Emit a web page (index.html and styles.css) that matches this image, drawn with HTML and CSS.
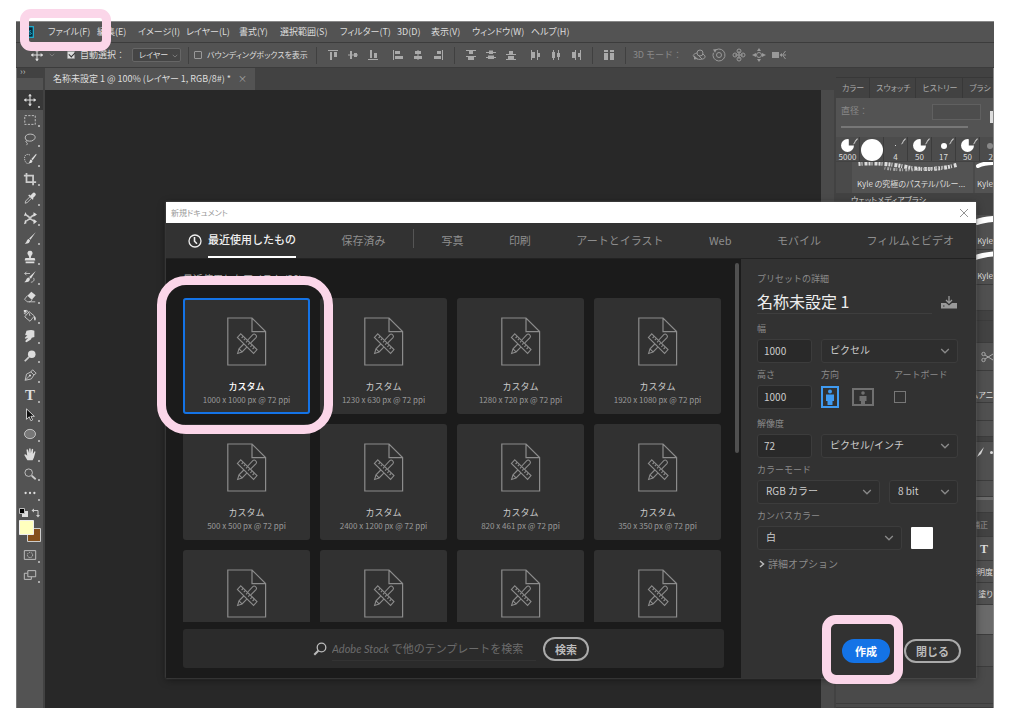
FILE: index.html
```html
<!DOCTYPE html>
<html lang="ja">
<head>
<meta charset="utf-8">
<title>新規ドキュメント</title>
<link rel="stylesheet" href="styles.css">
</head>
<body>
<svg class="defs" aria-hidden="true">
  <symbol id="doc" viewBox="0 0 40 49"><g fill="none" stroke="#8c8c8c" stroke-width="1.2"><path d="M.8 1H25l13.6 13.6V48H.8ZM25 1v13.6h13.6"/><g stroke-width="1.100"><path d="M13.800 16.800 30 32.600 26.600 36.400 10.400 20.400Z"/><path d="m16 19.500-1.400 1.500m3.600.7-1.400 1.500m3.600.7-1.400 1.500m3.600.7-1.400 1.500m3.600.7-1.400 1.500m3.600.7-1.400 1.500"/><path d="m16.800 27-4.800 4.800-1.400 4.600 4.500-1.500 4.700-4.700M20.800 23l5-5.400q1.400-1.200 2.900.2t.3 2.900l-5.200 5.200M12 31.800l3.100 3.100"/></g></g></symbol>
  <symbol id="chev" viewBox="0 0 10 6"><path d="m1.200 1 3.800 3.800L8.800 1" fill="none" stroke="#8a8a8a" stroke-width="1.300"/></symbol>
  <symbol id="move" viewBox="0 0 16 16"><path d="M8 1.500v13M1.500 8h13" stroke="#ddd" stroke-width="1.200"/><path d="M8 1 5.800 3.800h4.400zM8 15l2.200-2.800H5.800zM1 8l2.800-2.200v4.400zM15 8l-2.800 2.200V5.800z" fill="#ddd"/></symbol>
  <symbol id="tip" viewBox="0 0 8 10"><path d="M7.500.5 4.500 4" stroke="#ccc" stroke-width="1.200"/><path d="M4.500 3.500 2 7.500l3-2z" fill="#ccc"/></symbol>
</svg>

<div class="app">
  <nav class="menubar">
    <svg class="logo" viewBox="0 0 12 12"><rect x=".7" y=".7" width="10.600" height="10.600" fill="#06283a" stroke="#20b4d8" stroke-width="1.200"/><path d="M7 7.800c1 .8 2.400.6 2.400-.3 0-1-2.200-.8-2.200-2 0-.9 1.300-1 2-.5" fill="none" stroke="#20b4d8"/></svg>
    <ul class="menus">
      <li>ファイル(F)</li><li>編集(E)</li><li>イメージ(I)</li><li>レイヤー(L)</li><li>書式(Y)</li><li>選択範囲(S)</li><li>フィルター(T)</li><li>3D(D)</li><li>表示(V)</li><li>ウィンドウ(W)</li><li>ヘルプ(H)</li>
    </ul>
    <span class="mark mark-menu"></span>
  </nav>

  <div class="options">
    <svg class="i14"><use href="#move"/></svg>
    <svg class="i6"><use href="#chev"/></svg>
    <label class="check check-on"><input type="checkbox" checked>自動選択：</label>
    <span class="pick"><select class="layer" aria-label="選択対象"><option>レイヤー</option></select><svg class="pick-arrow small"><use href="#chev"/></svg></span>
    <i class="sep sep-a"></i>
    <label class="check check-box"><input type="checkbox">バウンディングボックスを表示</label>
    <i class="sep sep-b"></i>
    <div class="icons">
      <svg viewBox="0 0 12 12"><path d="M1 1h10v1H1zM3 3h2v8H3zM7 3h3v5H7z"/></svg>
      <svg viewBox="0 0 12 12"><path d="M1 5.500h10v1H1zM3 2h2v8H3zM7 4h3v4H7z"/></svg>
      <svg viewBox="0 0 12 12"><path d="M1 10h10v1H1zM3 1h2v8H3zM7 4h3v5H7z"/></svg>
    </div>
    <div class="icons">
      <svg viewBox="0 0 12 12"><path d="M1 1h1v10H1zM3 2h5v3H3zM3 7h8v3H3z"/></svg>
      <svg viewBox="0 0 12 12"><path d="M5.500 1h1v10h-1zM3 2h6v3H3zM2 7h8v3H2z"/></svg>
      <svg viewBox="0 0 12 12"><path d="M10 1h1v10h-1zM5 2h4v3H5zM2 7h7v3H2z"/></svg>
    </div>
    <i class="sep"></i>
    <div class="icons">
      <svg viewBox="0 0 12 12"><path d="M1 1h10v1H1zM4 2h4v3H4zM1 7h10v1H1zM3 8h6v3H3z"/></svg>
      <svg viewBox="0 0 12 12"><path d="M1 3h10v1H1zM4 1.500h4V5H4zM1 8h10v1H1zM3 6.500h6V10H3z"/></svg>
      <svg viewBox="0 0 12 12"><path d="M1 5h10v1H1zM4 2h4v3H4zM1 10h10v1H1zM3 7h6v3H3z"/></svg>
    </div>
    <div class="icons">
      <svg viewBox="0 0 12 12"><path d="M1 1h1v10H1zM2 3h3v6H2zM7 1h1v10H7zM8 4h2v4H8z"/></svg>
      <svg viewBox="0 0 12 12"><path d="M3 1h1v10H3zM2 3h3v6H2zM8 1h1v10H8zM7 4h3v4H7z"/></svg>
      <svg viewBox="0 0 12 12"><path d="M5 1h1v10H5zM2 3h3v6H2zM10 1h1v10h-1zM8 4h2v4H8z"/></svg>
    </div>
    <i class="sep"></i>
    <div class="icons"><svg viewBox="0 0 12 12"><path d="M1 1h4v2H1zM7 1h4v2H7zM1 4h4v7H1zM7 4h4v7H7z"/></svg></div>
    <i class="sep"></i>
    <span class="mode">3D モード：</span>
    <div class="icons icons-3d">
      <svg viewBox="0 0 14 14"><g class="ln"><circle cx="8" cy="5" r="3"/><path d="M5 5C1 6 0 8 3 9.500M5 11c4 1 9 0 8-3-.4-1-1.400-1.600-2.500-2M7 8l3 3"/></g><path d="M2 7.500 6 11l-4 .5z"/></svg>
      <svg viewBox="0 0 14 14"><g class="ln"><circle cx="7" cy="7" r="2.500"/><path d="M4 1.800a6 6 0 1 1-2.600 3"/></g><path d="M1 1.500 5 1 3 4.800z"/></svg>
      <svg viewBox="0 0 14 14"><g class="ln"><circle cx="7" cy="3" r="2"/><circle cx="7" cy="11" r="2"/><circle cx="3" cy="7" r="2"/><circle cx="11" cy="7" r="2"/><path d="M7 3v8M3 7h8"/></g></svg>
      <svg viewBox="0 0 14 14"><circle class="ln" cx="7" cy="7" r="2.500"/><path d="M7 0 5 3h4zM7 14l2-3H5zM0 7l4-2v4zM14 7l-4 2V5z"/></svg>
      <svg viewBox="0 0 14 14"><path d="M0 4h7v6H0zM7.500 7 10 5v4z"/><path class="ln" d="m13.500 3-3 4 3 4M11 7h3"/></svg>
    </div>
  </div>

  <div class="work">
    <aside class="tools">
      <div class="tools-head">››</div>
      <div class="grip"></div>
      <div class="toollist">
        <button class="tool on" aria-label="移動"><svg viewBox="0 0 16 16"><use href="#move"/></svg></button>
        <button class="tool" aria-label="長方形選択"><svg viewBox="0 0 16 16"><rect class="s" x="2" y="3" width="12" height="10" stroke-dasharray="2.500 1.500"/></svg></button>
        <button class="tool" aria-label="なげなわ"><svg viewBox="0 0 16 16"><path class="s" d="M5 10C1 8 2 3 7 2.500s8 2 6.500 5S8 11 5 10c-1.500-.5-2.500 1-1 2s1 1.500 0 3"/></svg></button>
        <button class="tool" aria-label="クイック選択"><svg viewBox="0 0 16 16"><path class="s" d="M8 3.500C3 1 1 5 2 9s3 5 6 3.500" stroke-dasharray="1.500 1"/><path class="f" d="M15 2 9.500 8l1.500 1.500L15.500 3zM9 8.500C7.500 9 8 11 6.500 12.500 9 13 11 12 10.800 10z"/></svg></button>
        <button class="tool" aria-label="切り抜き"><svg viewBox="0 0 16 16"><path class="s w" d="M4 1v10.500h11M1 4h10.500v11"/></svg></button>
        <button class="tool" aria-label="スポイト"><svg viewBox="0 0 16 16"><path class="f" d="M8.500 5 11 2.500q1.500-1.500 3 0t0 3L11.500 8l.5 1-1 1-5-5 1-1z"/><path class="s" d="m8 6.500-5 5L2.500 14l2.300-.8L10 8"/></svg></button>
        <button class="tool" aria-label="コンテンツに応じた移動"><svg viewBox="0 0 16 16"><path class="s w" d="M2 4c4 0 8 8 12 8M2 12c4 0 8-8 12-8"/><path class="f" d="m12 1.500 4 2.500-4 2.500zM3 1l1 3-3 2zM3 10l1 4-3 1zM12 9l4 3-4 3z"/></svg></button>
        <button class="tool" aria-label="ブラシ"><svg viewBox="0 0 16 16"><path class="f" d="M14.500 1.500 7 8.500 8.500 10zM6.500 9C4 9.500 5 12 2 14.500c3 .5 6-1 6-4z"/></svg></button>
        <button class="tool" aria-label="スタンプ"><svg viewBox="0 0 16 16"><path class="f" d="M8 1a2.700 2.700 0 0 1 2 4.700L9 8v1h4q1 0 1 3H2q0-3 1-3h4V8L6 5.700A2.700 2.700 0 0 1 8 1zM3 13h10v2H3z"/></svg></button>
        <button class="tool" aria-label="ヒストリーブラシ"><svg viewBox="0 0 16 16"><path class="f" d="M14.500 1 7 8l2 2zM6.500 8.500c-3 .5-2.500 3.500-5 5.500 3.500.5 6.500-1 6.500-4z"/><path class="s" d="M2 4h6M2 4l2-2M2 4l2 2M12 9c2 3-1 5-3 5" /></svg></button>
        <button class="tool" aria-label="消しゴム"><svg viewBox="0 0 16 16"><path class="f" d="m9.500 2 5 4-4.500 5-5-4.500z"/><path class="s" d="M5 6.500 1.800 10.500l3 3H8l2.500-2.500M7 13.500h7"/></svg></button>
        <button class="tool" aria-label="塗りつぶし"><svg viewBox="0 0 16 16"><path class="s" d="m7 3 6 5-5 6-6-5zM1 2l3 2M1 5l3 1M4 1l3 4 1 3"/><path class="f" d="M13 8c2 1 2 4 1 5s-2-2-1-5zM1 1h3v3H1z"/></svg></button>
        <button class="tool" aria-label="指先"><svg viewBox="0 0 16 16"><path class="f" d="M4 2q6-2 9 0v7l-3 1-1 2-5 3q-2 0-1-2l3-3-3 1q-2-1 0-2l2-2-2 0q-1-1 0-2z"/></svg></button>
        <button class="tool" aria-label="覆い焼き"><svg viewBox="0 0 16 16"><circle class="f" cx="10" cy="6" r="4.300"/><path class="s w" d="m7 9-5 5"/></svg></button>
        <button class="tool" aria-label="ペン"><svg viewBox="0 0 16 16"><path class="s" d="M2.500 14 4 7l5-2.500L12.500 8l-3 4.500zM2.500 14l5-5M9 4.500 11 2l4 4-2.500 2"/><circle class="f" cx="8" cy="8.500" r="1.200"/></svg></button>
        <button class="tool letter" aria-label="文字">T</button>
        <button class="tool" aria-label="パス選択"><svg viewBox="0 0 16 16"><path d="M4 1v12l3-3 2 4.500 2-1L9 9.500h4z" fill="#111" stroke="#ddd"/></svg></button>
        <button class="tool" aria-label="楕円形"><svg viewBox="0 0 16 16"><ellipse cx="8" cy="8" rx="6.300" ry="5.300" fill="#777" stroke="#ccc"/></svg></button>
        <button class="tool" aria-label="手のひら"><svg viewBox="0 0 16 16"><path class="f" d="M5 15 1.500 9Q2 7.500 4 9l.8 1L4 3q1-1 1.700 0L7 7V2q1-1.200 1.700 0L9 7l1-4.500q1-1 1.600 0L11.300 8 13 5q1-.5 1.300.5L12.500 12 11 15z"/></svg></button>
        <button class="tool" aria-label="ズーム"><svg viewBox="0 0 16 16"><circle class="s" cx="6.500" cy="6.500" r="4.300"/><path class="s w" d="m10 10 4.500 4"/></svg></button>
        <button class="tool" aria-label="その他"><svg viewBox="0 0 16 16"><circle class="f" cx="3" cy="8" r="1.300"/><circle class="f" cx="8" cy="8" r="1.300"/><circle class="f" cx="13" cy="8" r="1.300"/></svg></button>
      </div>
      <svg class="swatches" viewBox="0 0 24 38"><path d="M4 4h6v6H4z" fill="#ddd"/><path d="M1.500 1.500h5v5h-5z" fill="#000" stroke="#bbb"/><path d="M15 3.500h5v5" fill="none" stroke="#ccc"/><path d="M13.500 3.500 16 1.500v4zM20 10.500 18 8h4z" fill="#ccc"/><path d="M9.500 21.500h13v13h-13z" fill="#84501c" stroke="#ccc"/><path d="M1.500 13.500h14v14h-14z" fill="#ffffbe" stroke="#eee"/></svg>
      <button class="tool extra" aria-label="クイックマスク"><svg viewBox="0 0 16 16"><path class="s" d="M1.500 3h13v10h-13z"/><circle class="s" cx="8" cy="8" r="3" stroke-dasharray="1.500 1"/></svg></button>
      <button class="tool extra" aria-label="スクリーンモード"><svg viewBox="0 0 16 16"><path class="s" d="M5.500 3h9v7h-9zM5 6H1.500v7h8v-3"/></svg></button>
    </aside>

    <main class="docs">
      <div class="doctabs"><div class="doctab">名称未設定 1 @ 100% (レイヤー 1, RGB/8#) *<span>×</span></div></div>
      <div class="canvas"></div>
    </main>

    <aside class="dock">
      <div class="dock-head"></div>
      <div class="dock-tabs"><span>カラー</span><span>スウォッチ</span><span>ヒストリー</span><span>ブラシ</span></div>
      <div class="dock-size"><div class="size-row"><span>直径：</span><i class="box"></i><i class="new"></i></div><i class="track"></i></div>
      <div class="dots">
        <div><i class="d d14 cut"></i><svg><use href="#tip"/></svg><b>5000</b></div>
        <div><i class="d d22"></i></div>
        <div><i class="d d1"></i><svg><use href="#tip"/></svg><b>4</b></div>
        <div><i class="d d14 cut"></i><svg><use href="#tip"/></svg><b>50</b></div>
        <div><i class="d d6"></i><svg><use href="#tip"/></svg><b>17</b></div>
        <div><i class="d d14 cut"></i><svg><use href="#tip"/></svg><b>50</b></div>
        <div class="last"><i class="d d6 dim"></i><b>2</b></div>
      </div>
      <div class="brushes">
        <div class="brush wide"><svg viewBox="0 0 116 12"><path d="M4 2q24-2 48 3t50-2" fill="none" stroke="#ddd" stroke-width="4" stroke-dasharray="2 1 1 2 3 1"/><path d="M30 6q20 4 60-1" fill="none" stroke="#aaa" stroke-width="3" stroke-dasharray="1 2 2 1"/></svg><span>Kyle の究極のパステルパルー...</span></div>
        <div class="brush"><svg viewBox="0 0 18 12"><path d="M3 4q6-3 15-3" stroke="#fff" stroke-width="4" fill="none" stroke-linecap="round"/></svg><span>Kyle</span></div>
      </div>
      <div class="folder">ウェットメディアブラシ</div>
      <div class="strip kyle"><svg viewBox="0 0 20 12"><path d="M4 7q5-2 16-3" stroke="#fff" stroke-width="6" fill="none" stroke-linecap="round"/></svg><span>Kyle</span></div>
      <div class="strip kyle"><svg viewBox="0 0 20 12"><path d="M1 8q8-3 19-4" stroke="#fff" stroke-width="5" fill="none" stroke-linecap="round"/></svg><span>Kyle</span></div>
      <div class="strip h26"></div>
      <div class="strip dark h10"></div>
      <div class="strip dark h22"></div>
      <div class="strip h28"><svg class="i12" viewBox="0 0 12 12"><g fill="none" stroke="#aaa"><circle cx="2.500" cy="3" r="1.700"/><circle cx="2.500" cy="9" r="1.700"/><path d="m4 4 8 5M4 8l8-5"/></g></svg></div>
      <div class="strip h32 low"><span>ムアニ</span></div>
      <div class="strip h18"></div>
      <div class="strip h16"></div>
      <div class="strip dark h5"></div>
      <div class="strip h39 top"><svg class="i12" viewBox="0 0 12 12"><path d="M8 1 3 7l-2 4 4-3z" fill="#ddd"/></svg><i class="dot"></i></div>
      <div class="strip h16"></div>
      <div class="strip h16 bar"></div>
      <div class="strip dark h24 dimtext"><span>補正</span></div>
      <div class="strip h24 serif"><span>T</span></div>
      <div class="strip h22"><span>透明度</span></div>
      <div class="strip h22"><span>塗り</span></div>
      <div class="strip lit h30"></div>
      <div class="strip h32"></div>
      <div class="strip mid h37"></div>
      <div class="strip mid rest"></div>
    </aside>
  </div>

  <section class="dialog" role="dialog" aria-label="新規ドキュメント">
    <header class="titlebar"><span>新規ドキュメント</span><button class="close" aria-label="閉じる"><svg viewBox="0 0 10 10"><path d="m1 1 8 8M9 1 1 9" stroke="#888" stroke-width=".9"/></svg></button></header>
    <nav class="tabs">
      <button class="tab active"><svg viewBox="0 0 14 14"><g fill="none" stroke="#eee" stroke-width="1.300"><circle cx="7" cy="7" r="6"/><path d="M6.500 3v4.200l2.500 2.500" stroke-width="1.600"/></g></svg><span>最近使用したもの</span></button>
      <button class="tab">保存済み</button><i class="tabsep"></i>
      <button class="tab">写真</button><button class="tab">印刷</button><button class="tab">アートとイラスト</button><button class="tab">Web</button><button class="tab">モバイル</button><button class="tab">フィルムとビデオ</button>
    </nav>
    <div class="content">
      <div class="left">
        <h2>最近使用したアイテム (20)</h2>
        <div class="presets">
          <button class="card selected"><svg><use href="#doc"/></svg><b>カスタム</b><small>1000 x 1000 px @ 72 ppi</small></button>
          <button class="card"><svg><use href="#doc"/></svg><b>カスタム</b><small>1230 x 630 px @ 72 ppi</small></button>
          <button class="card"><svg><use href="#doc"/></svg><b>カスタム</b><small>1280 x 720 px @ 72 ppi</small></button>
          <button class="card"><svg><use href="#doc"/></svg><b>カスタム</b><small>1920 x 1080 px @ 72 ppi</small></button>
          <button class="card"><svg><use href="#doc"/></svg><b>カスタム</b><small>500 x 500 px @ 72 ppi</small></button>
          <button class="card"><svg><use href="#doc"/></svg><b>カスタム</b><small>2400 x 1200 px @ 72 ppi</small></button>
          <button class="card"><svg><use href="#doc"/></svg><b>カスタム</b><small>820 x 461 px @ 72 ppi</small></button>
          <button class="card"><svg><use href="#doc"/></svg><b>カスタム</b><small>350 x 350 px @ 72 ppi</small></button>
          <button class="card" aria-label="カスタム"><svg><use href="#doc"/></svg></button>
          <button class="card" aria-label="カスタム"><svg><use href="#doc"/></svg></button>
          <button class="card" aria-label="カスタム"><svg><use href="#doc"/></svg></button>
          <button class="card" aria-label="カスタム"><svg><use href="#doc"/></svg></button>
        </div>
        <form class="search">
          <svg viewBox="0 0 14 14"><g fill="none" stroke="#bbb"><circle cx="8.500" cy="5.500" r="4.300" stroke-width="1.300"/><path d="m5.300 8.700-4 4" stroke-width="2"/></g></svg>
          <input type="text" aria-label="テンプレートを検索" placeholder="Adobe Stock で他のテンプレートを検索">
          <button type="button" class="pill">検索</button>
        </form>
        <i class="thumb"></i>
      </div>
      <form class="details">
        <h3>プリセットの詳細</h3>
        <div class="name"><input type="text" aria-label="名前" value="名称未設定 1"><button type="button" class="save" aria-label="プリセットを保存"><svg viewBox="0 0 18 13"><path d="M1 7h5l3 2.500L12 7h5v5.500H1z" fill="#999"/><path d="M9 0v6M6 4l3 3 3-3" fill="none" stroke="#999" stroke-width="1.300"/><path d="M3 10h1.500" stroke="#333"/></svg></button></div>
        <div class="row">
          <div class="field num"><label for="w">幅</label><input id="w" type="text" value="1000"></div>
          <div class="field grow"><span class="pick"><select aria-label="単位"><option>ピクセル</option></select><svg class="pick-arrow"><use href="#chev"/></svg></span></div>
        </div>
        <div class="row after">
          <div class="field num"><label for="h">高さ</label><input id="h" type="text" value="1000"></div>
          <div class="field grow"><span class="lbl">方向</span>
            <div class="orient">
              <button type="button" aria-label="縦"><svg width="18" height="22" viewBox="0 0 18 22"><path d="M1 1h16v20H1z" fill="none" stroke="#3f9bf2" stroke-width="2"/><g fill="#3f9bf2"><circle cx="9" cy="5.500" r="2"/><path d="M5 8.500h8V15h-1.500v4h-5v-4H5z"/></g></svg></button>
              <button type="button" aria-label="横"><svg width="22" height="18" viewBox="0 0 22 18"><path d="M1 1h20v16H1z" fill="none" stroke="#707070" stroke-width="2"/><g fill="#707070"><circle cx="11" cy="5" r="1.800"/><path d="M7.500 8h7v5H13v3H9v-3H7.500z"/></g></svg></button>
            </div></div>
          <div class="field art"><label for="art">アートボード</label><div class="artbox"><input id="art" type="checkbox"></div></div>
        </div>
        <div class="row">
          <div class="field num"><label for="r">解像度</label><input id="r" type="text" value="72"></div>
          <div class="field grow"><span class="pick"><select aria-label="解像度の単位"><option>ピクセル/インチ</option></select><svg class="pick-arrow"><use href="#chev"/></svg></span></div>
        </div>
        <div class="row">
          <div class="field grow"><label for="cm">カラーモード</label><span class="pick"><select id="cm"><option>RGB カラー</option></select><svg class="pick-arrow"><use href="#chev"/></svg></span></div>
          <div class="field bits"><span class="pick"><select aria-label="ビット数"><option>8 bit</option></select><svg class="pick-arrow"><use href="#chev"/></svg></span></div>
        </div>
        <div class="row">
          <div class="field grow"><label for="cc">カンバスカラー</label><span class="pick"><select id="cc"><option>白</option></select><svg class="pick-arrow"><use href="#chev"/></svg></span></div>
          <div class="field colour"><button type="button" aria-label="カンバスの色"></button></div>
        </div>
        <button type="button" class="more"><svg viewBox="0 0 6 8"><path d="m1 1 3.500 3L1 7" fill="none" stroke="#bbb" stroke-width="1.500"/></svg>詳細オプション</button>
        <div class="actions"><button type="button" class="pill primary">作成</button><button type="button" class="pill">閉じる</button></div>
      </form>
    </div>
    <span class="mark mark-card"></span>
    <span class="mark mark-create"></span>
  </section>
</div>
</body>
</html>
```
FILE: styles.css
```css
* { box-sizing: border-box; }
body {
  margin: 0; min-height: 100vh; padding: 21px 30px 18px 16px; display: flex;
  background: #fff; color: #ddd;
  font: 9px/14px "Noto Sans CJK JP", "Noto Sans", sans-serif;
}
button, input, select { font: inherit; color: inherit; margin: 0; padding: 0; border: 0; background: none; }
button { display: block; }
svg { display: block; flex: none; }
.defs { position: absolute; width: 0; height: 0; }
.app { position: relative; flex: 1; min-width: 0; display: flex; flex-direction: column; background: #535353; }

.menubar { position: relative; height: 22px; display: flex; align-items: center; border-top: 1px solid #888; border-bottom: 1px solid #3c3c3c; }
.logo { width: 12px; height: 12px; margin-left: 6px; }
.menus {
  margin: 0 0 0 14px; padding: 0; list-style: none; display: grid; white-space: nowrap;
  grid-template-columns: 49px 41px 48px 53px 41px 60px 57px 34px 41px 59px 50px;
  font-feature-settings: "palt";
}

.options { height: 25px; display: flex; align-items: center; padding-left: 14px; white-space: nowrap; border-bottom: 1px solid #3c3c3c; }
.i14 { width: 14px; height: 14px; }
.i12 { width: 12px; height: 12px; }
.i6 { width: 6px; height: 4px; margin: 0 12px 0 5px; }
.check { display: flex; align-items: center; gap: 5px; }
.check input { appearance: none; width: 8px; height: 8px; border: 1px solid #999; border-radius: 1px; }
.check-on { width: 65px; }
.check-on input { background: #ddd; position: relative; }
.check-on input::after { content: ""; position: absolute; left: 1px; top: 0; width: 5px; height: 3px; border: solid #333; border-width: 0 0 1px 1px; transform: rotate(-45deg); }
.check-box { font-size: 8px; font-feature-settings: "palt"; }
.pick { position: relative; display: block; }
.pick select { appearance: none; display: block; width: 100%; }
.pick-arrow { position: absolute; right: 8px; top: 9px; width: 10px; height: 6px; pointer-events: none; }
.pick-arrow.small { right: 3px; top: 6px; width: 6px; height: 4px; }
.pick .layer { width: 49px; height: 14px; padding-left: 6px; background: #454545; border: 1px solid #666; border-radius: 2px; font-size: 8px; line-height: 12px; font-feature-settings: "palt"; }
.sep { width: 1px; height: 17px; background: #404040; }
.sep-a { margin: 0 5px 0 7px; }
.sep-b { margin-left: 8px; }
.icons { display: flex; gap: 8px; padding: 0 10px; }
.icons + .icons { padding-left: 3px; }
.icons svg { width: 12px; height: 12px; fill: #aaa; }
.icons-3d { gap: 6px; }
.icons-3d svg { width: 14px; height: 14px; fill: #999; }
.icons-3d .ln { fill: none; stroke: #999; }
.mode { padding-left: 7px; color: #8a8a8a; }

.work { flex: 1; min-height: 0; display: flex; background: #424242; }
.tools { width: 27px; background: #535353; border-left: 1px solid #777; }
.tools-head { height: 10px; padding-left: 3px; background: #424242; color: #bbb; line-height: 7px; }
.grip { height: 12px; }
.toollist { height: 413px; display: flex; flex-direction: column; }
.tool { position: relative; flex: 1; width: 100%; display: flex; align-items: center; justify-content: center; padding: 0; }
.tool svg { width: 14px; height: 14px; }
.tool::after { content: ""; position: absolute; right: 3px; bottom: 2px; width: 2px; height: 2px; background: #aaa; }
.tool.on { background: #383838; }
.letter { font: bold 15px/18px "Liberation Serif", serif; }
.tool .s { fill: none; stroke: #ccc; stroke-width: 1; }
.tool .w { stroke-width: 2; }
.tool .f { fill: #ddd; }
.swatches { width: 24px; height: 38px; margin: 4px 0 0 1px; }
.extra { height: 20px; }
.docs { flex: 1; min-width: 0; display: flex; flex-direction: column; padding-left: 2px; }
.doctabs { height: 22px; display: flex; }
.doctab { padding: 4px 8px; background: #535353; white-space: nowrap; font-feature-settings: "palt"; }
.doctab span { margin-left: 7px; color: #aaa; }
.canvas { flex: 1; background: #282828; border-right: 13px solid #4a4a4a; }

.dock { width: 160px; display: flex; flex-direction: column; overflow: hidden; padding-left: 2px; white-space: nowrap; font-size: 8px; font-feature-settings: "palt"; border-right: 1px solid #888; background: #424242; }
.dock > * { flex: none; }
.dock-head { height: 10px; border-bottom: 1px solid #383838; }
.dock-tabs { height: 20px; display: flex; align-items: center; color: #aaa; }
.dock-tabs span { padding: 3px 5px 3px 6px; border-right: 1px solid #383838; }
.dock-tabs span:last-child { padding-right: 0; border: 0; }
.dock-size { height: 39px; padding: 6px 0 0 5px; background: #535353; color: #888; }
.size-row { display: flex; height: 16px; }
.size-row span { width: 91px; font-size: 9px; font-feature-settings: normal; }
.box { width: 49px; border: 1px solid #606060; background: #4d4d4d; }
.new { flex: 1; height: 12px; margin: 7px 0 0 9px; background: #ddd; }
.track { display: block; width: 127px; height: 2px; margin-top: 6px; background: #777; }
.dots { height: 25px; display: flex; background: #424242; }
.dots div { position: relative; width: 24px; height: 24px; flex: none; display: flex; flex-direction: column; align-items: center; justify-content: flex-end; background: #4c4c4c; border-right: 1px solid #3c3c3c; }
.dots .last { width: auto; flex: 1; align-items: flex-end; border: 0; }
.dots b { font-weight: 400; line-height: 9px; }
.dots svg { position: absolute; right: 1px; top: 1px; width: 7px; height: 9px; }
.d { border-radius: 50%; background: #fff; }
.d14 { width: 13px; height: 13px; }
.cut { clip-path: polygon(0 0, 60% 0, 60% 50%, 100% 50%, 100% 100%, 0 100%); }
.d22 { width: 22px; height: 22px; }
.d1 { width: 1px; height: 1px; margin-bottom: 6px; }
.d6 { width: 6px; height: 6px; margin-bottom: 3px; }
.dim { background: #888; }
.brushes { height: 31px; display: flex; gap: 2px; background: #4a4a4a; padding-left: 16px; }
.brush { flex: 1; min-width: 0; background: #535353; }
.brush span { display: block; padding: 3px 0 0 2px; }
.brush svg { width: 100%; height: 12px; }
.brush.wide { flex: none; width: 121px; }
.brush.wide span { padding-left: 5px; }
.folder { height: 22px; padding-left: 15px; }
.strip { display: flex; align-items: center; justify-content: flex-end; background: #505050; border-bottom: 1px solid #3c3c3c; }
.strip.dark { background: #424242; }
.strip.mid { background: #4a4a4a; }
.strip.lit { background: #6a6a6a; }
.kyle { height: 35px; flex-direction: column; align-items: flex-end; justify-content: flex-start; }
.kyle svg { width: 20px; height: 12px; }
.kyle span { padding-top: 7px; }
.low { align-items: flex-end; }
.top { align-items: flex-start; padding-top: 4px; }
.dot { width: 3px; height: 3px; margin: 5px 0 0 2px; border-radius: 50%; background: #ddd; }
.bar { box-shadow: inset 0 3px #6a6a6a; }
.dimtext { color: #999; padding-right: 5px; }
.serif { padding-right: 5px; font: bold 12px/14px "Liberation Serif", serif; }
.h5 { height: 5px; } .h10 { height: 10px; } .h16 { height: 16px; } .h18 { height: 18px; }
.h22 { height: 22px; } .h24 { height: 24px; } .h26 { height: 26px; } .h28 { height: 28px; }
.h30 { height: 30px; } .h32 { height: 32px; } .h37 { height: 37px; } .h39 { height: 39px; }
.dock .rest { flex: 1; }

.dialog { position: absolute; left: 150px; right: 18px; top: 181px; bottom: 30px; display: flex; flex-direction: column; background: #323232; box-shadow: 0 0 2px #666, 0 2px 8px rgba(0, 0, 0, .4); }
.titlebar { height: 21px; display: flex; align-items: center; justify-content: space-between; padding: 0 7px 0 5px; background: #fff; color: #999; font-size: 8px; font-feature-settings: "palt"; }
.close svg { width: 10px; height: 10px; }
.tabs { height: 36px; display: flex; justify-content: space-between; align-items: stretch; padding: 0 22px; border-bottom: 1px solid #222; font-size: 11px; color: #8e8e8e; }
.tab { white-space: nowrap; padding-bottom: 2px; }
.tab.active { display: flex; align-items: center; gap: 6px; padding: 0; color: #f0f0f0; font-weight: 500; }
.tab.active svg { width: 14px; height: 14px; }
.tab.active span { height: 35px; line-height: 33px; border-bottom: 2px solid #fff; }
.tabsep { width: 1px; height: 19px; margin: 6px -18px 0; background: #555; }
.content { flex: 1; min-height: 0; display: flex; }
.left { position: relative; flex: 1; min-width: 0; display: flex; flex-direction: column; padding: 0 17px 10px; background: #1b1b1b; }
h2 { margin: 0; height: 39px; padding-top: 13px; font-size: 10px; font-weight: 400; color: #aaa; }
.presets { flex: 1; min-height: 0; overflow: hidden; display: grid; grid-template-columns: repeat(4, 1fr); grid-auto-rows: 116px; gap: 10px; margin: 0 3px 7px 0; }
.card { display: flex; flex-direction: column; align-items: center; justify-content: flex-start; padding-top: 19px; background: #313131; border-radius: 3px; }
.card svg { width: 40px; height: 49px; }
.card b { margin-top: 14px; font-weight: 400; line-height: 13px; color: #ccc; }
.card small { font-size: 8px; line-height: 13px; color: #999; white-space: nowrap; }
.selected { box-shadow: inset 0 0 0 2px #1473e6; }
.selected b { color: #fff; font-weight: 500; }
.search { height: 39px; display: flex; align-items: center; justify-content: center; padding-right: 5px; background: #2b2b2b; border-radius: 3px; }
.search svg { width: 14px; height: 14px; }
.search input { width: 204px; height: 24px; margin: 0 7px 0 5px; border-bottom: 1px solid #333; font: italic 11px/22px Lato, "Noto Sans CJK JP", sans-serif; font-synthesis: none; outline: 0; }
.search input::placeholder { color: #6c6c6c; opacity: 1; }
.thumb { position: absolute; right: 2px; top: 4px; width: 4px; height: 190px; background: #505050; border-radius: 2px; }
.pill { height: 24px; padding: 0 10px; border: 2px solid #aaa; border-radius: 12px; font-size: 11px; font-weight: 700; line-height: 18px; color: #bbb; white-space: nowrap; }
.primary { padding: 0 11px; border-color: #1473e6; background: #1473e6; color: #fff; }

.details { width: 235px; display: flex; flex-direction: column; padding: 13px 18px 15px 16px; color: #8a8a8a; }
h3 { margin: 0; font-size: 9px; font-weight: 400; }
.name { display: flex; align-items: center; justify-content: space-between; margin: 4px 0 8px; }
.name input { width: 175px; height: 24px; padding-bottom: 2px; border-bottom: 1px solid #3e3e3e; font-size: 16px; color: #eee; }
.save svg { width: 18px; height: 13px; }
.row { display: flex; align-items: flex-end; gap: 9px; margin-bottom: 5px; }
.row.after { margin-bottom: 8px; }
.field { display: flex; flex-direction: column; gap: 3px; }
.grow { flex: 1; min-width: 0; }
.num { width: 55px; }
.num input, .field select { height: 24px; width: 100%; background: #292929; border: 1px solid #3c3c3c; border-radius: 3px; font-size: 10px; color: #ccc; padding: 0 0 2px 6px; }
.field select { padding-left: 8px; background: #2e2e2e; }
.orient { height: 24px; display: flex; align-items: center; gap: 13px; }
.art { width: 64px; }
.artbox { height: 24px; display: flex; align-items: center; }
.artbox input { appearance: none; width: 12px; height: 12px; border: 1px solid #777; }
.bits { width: 69px; }
.colour { width: 47px; padding-bottom: 1px; }
.colour button { width: 22px; height: 22px; background: #fff; border-radius: 1px; }
.more { display: flex; align-items: center; gap: 3px; margin: 2px 0 0 2px; font-size: 10px; }
.more svg { width: 6px; height: 8px; }
.actions { display: flex; justify-content: flex-end; gap: 14px; margin: auto -3px 0 0; }

.mark { position: absolute; pointer-events: none; border: 9px solid #fbd6e9; }
.mark-menu { left: 4px; top: -13px; width: 91px; height: 42px; border-radius: 11px; }
.mark-card { left: -9px; top: 74px; width: 176px; height: 158px; border-radius: 29px; }
.mark-create { right: 73px; bottom: -6px; width: 81px; height: 69px; border-radius: 14px; }
```
